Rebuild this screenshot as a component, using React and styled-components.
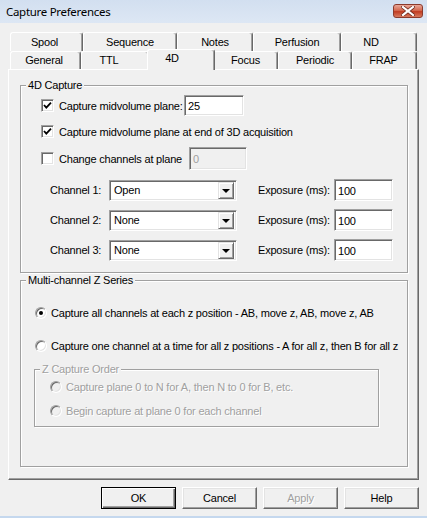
import React from 'react';
import styled, { createGlobalStyle } from 'styled-components';

const GlobalStyle = createGlobalStyle`
  html, body {
    margin: 0;
    padding: 0;
    background: #f0f0f0;
  }
  body {
    font-family: "Liberation Sans", Arial, sans-serif;
    font-size: 11px;
    letter-spacing: -0.2px;
    color: #000;
  }
`;

const Window = styled.div`
  width: 427px;
  height: 518px;
  box-sizing: border-box;
  display: flex;
  flex-direction: column;
  background: #f0f0f0;
  border-bottom: 2px solid #c5d8ee;
  overflow: hidden;
`;

const TitleBar = styled.div`
  height: 23px;
  flex: none;
  display: flex;
  align-items: flex-start;
  justify-content: space-between;
  padding: 0 4px 0 6px;
  background: linear-gradient(#d2dff0, #dde7f4);
  span {
    font-family: "Noto Sans", "Open Sans", sans-serif;
    font-size: 11.5px;
    letter-spacing: -0.3px;
    line-height: 23px;
  }
`;

const CloseButton = styled.div`
  margin-top: 4px;
  width: 30px;
  height: 14px;
  box-sizing: border-box;
  border: 1px solid #8b3a2c;
  border-radius: 3px;
  background: linear-gradient(#e9a899, #d46a51 45%, #c13c22 55%, #d77a5f);
  display: flex;
  align-items: center;
  justify-content: center;
`;

const Body = styled.div`
  flex: 1;
  display: flex;
  flex-direction: column;
  padding: 9px 8px 0;
`;

const TabRow = styled.div`
  display: flex;
  padding-left: 2px;
  height: ${(p) => p.$h}px;
`;

const Tab = styled.div`
  position: relative;
  width: ${(p) => p.$w}px;
  box-sizing: border-box;
  border: 1px solid #fff;
  border-bottom: none;
  border-right-color: #696969;
  border-radius: 3px 3px 0 0;
  box-shadow: inset -1px 0 0 #a0a0a0;
  display: flex;
  align-items: center;
  justify-content: center;
  padding-right: ${(p) => p.$shift || 0}px;
  padding-bottom: 1px;
  background: #f0f0f0;
`;

const ActiveTab = styled(Tab)`
  z-index: 2;
  margin: -2px -2px -1px;
  width: ${(p) => p.$w + 4}px;
  align-items: flex-start;
  padding-top: 2px;
`;

const Panel = styled.div`
  width: 411px;
  height: 411px;
  box-sizing: border-box;
  border: 1px solid;
  border-color: #fff #696969 #696969 #fff;
  box-shadow: inset -1px -1px 0 #a0a0a0;
  padding: 9px 10px 12px 11px;
  display: flex;
  flex-direction: column;
  gap: 1px;
`;

const Group = styled.fieldset`
  margin: ${(p) => p.$mt || 0}px 0 0;
  min-width: 0;
  width: ${(p) => (p.$w ? `${p.$w}px` : 'auto')};
  box-sizing: border-box;
  border: 1px solid #a0a0a0;
  box-shadow: 1px 1px 0 #fff, inset 1px 1px 0 #fff;
  padding: ${(p) => p.$pt}px 0 ${(p) => p.$pb}px ${(p) => p.$pl}px;
  display: flex;
  flex-direction: column;
  flex: ${(p) => (p.$grow ? 1 : 'none')};
  legend {
    margin-left: ${(p) => 5 - p.$pl}px;
    padding: 0 2px;
    line-height: 13px;
    background: #f0f0f0;
    color: ${(p) => (p.$disabled ? '#a0a0a0' : '#000')};
    text-shadow: ${(p) => (p.$disabled ? '1px 1px 0 #fff' : 'none')};
  }
`;

const CheckRow = styled.div`
  display: flex;
  align-items: center;
  height: ${(p) => p.$h}px;
  margin-top: ${(p) => p.$mt || 0}px;
`;

const Label = styled.span`
  width: ${(p) => (p.$w ? `${p.$w}px` : 'auto')};
  flex: none;
  white-space: nowrap;
  margin-left: ${(p) => p.$ml || 0}px;
  color: ${(p) => (p.$disabled ? '#a0a0a0' : '#000')};
  text-shadow: ${(p) => (p.$disabled ? '1px 1px 0 #fff' : 'none')};
`;

const sunken = `
  box-sizing: border-box;
  border: 1px solid;
  border-color: #a0a0a0 #fff #fff #a0a0a0;
  box-shadow: inset 1px 1px 0 #696969, inset -1px -1px 0 #e3e3e3;
`;

const CheckBox = styled.span`
  ${sunken}
  width: 13px;
  height: 13px;
  flex: none;
  background: #fff;
  display: flex;
  align-items: center;
  justify-content: center;
`;

const TextField = styled.div`
  ${sunken}
  width: ${(p) => p.$w}px;
  height: ${(p) => p.$h}px;
  flex: none;
  background: ${(p) => (p.$disabled ? '#f0f0f0' : '#fff')};
  color: ${(p) => (p.$disabled ? '#a0a0a0' : '#000')};
  display: flex;
  align-items: center;
  padding: 1px 3px 0;
`;

const ChannelRow = styled.div`
  display: flex;
  align-items: center;
  height: 22px;
  margin-left: 9px;
  margin-top: ${(p) => p.$mt}px;
`;

const Combo = styled.div`
  ${sunken}
  width: 128px;
  height: 21px;
  flex: none;
  background: #fff;
  display: flex;
  align-items: center;
  justify-content: space-between;
  padding: 2px 2px 2px 4px;
`;

const DropButton = styled.div`
  width: 16px;
  height: 17px;
  box-sizing: border-box;
  border: 1px solid;
  border-color: #e3e3e3 #696969 #696969 #e3e3e3;
  box-shadow: inset 1px 1px 0 #fff, inset -1px -1px 0 #a0a0a0;
  background: #f0f0f0;
  display: flex;
  align-items: center;
  justify-content: center;
  &::after {
    content: '';
    border-left: 4px solid transparent;
    border-right: 4px solid transparent;
    border-top: 4px solid #000;
    margin-top: 1px;
  }
`;

const RadioRow = styled.div`
  display: flex;
  align-items: center;
  height: 16px;
  padding-left: ${(p) => p.$pl || 0}px;
  margin-top: ${(p) => p.$mt || 0}px;
  gap: 4px;
`;

const Radio = styled.span`
  ${sunken}
  width: 12px;
  height: 12px;
  flex: none;
  border-radius: 50%;
  background: ${(p) => (p.$disabled ? '#f0f0f0' : '#fff')};
  display: flex;
  align-items: center;
  justify-content: center;
  &::after {
    content: '';
    display: ${(p) => (p.$checked ? 'block' : 'none')};
    width: 4px;
    height: 4px;
    border-radius: 50%;
    background: #000;
  }
`;

const ButtonBar = styled.div`
  display: flex;
  justify-content: flex-end;
  gap: 6px;
  margin-top: 7px;
`;

const Button = styled.div`
  width: 75px;
  height: 22px;
  box-sizing: border-box;
  border: 1px solid;
  border-color: ${(p) => (p.$default ? '#000' : '#fff #696969 #696969 #fff')};
  box-shadow: ${(p) =>
    p.$default
      ? 'inset 1px 1px 0 #fff, inset -1px -1px 0 #696969, inset -2px -2px 0 #a0a0a0'
      : 'inset -1px -1px 0 #a0a0a0, inset 1px 1px 0 #e3e3e3'};
  display: flex;
  align-items: center;
  justify-content: center;
  color: ${(p) => (p.$disabled ? '#a0a0a0' : '#000')};
  text-shadow: ${(p) => (p.$disabled ? '1px 1px 0 #fff' : 'none')};
`;

const row1 = [
  ['Spool', 73, 4],
  ['Sequence', 94],
  ['Notes', 76],
  ['Perfusion', 88],
  ['ND', 76, 16],
];

const row2 = [
  ['General', 71, 3],
  ['TTL', 68, 12],
  ['4D', 64, 18, true],
  ['Focus', 65],
  ['Periodic', 74],
  ['FRAP', 65, 2],
];

const channels = [
  ['Channel 1:', 'Open'],
  ['Channel 2:', 'None'],
  ['Channel 3:', 'None'],
];

const Check = () => (
  <svg width="9" height="9" viewBox="0 0 9 9">
    <path d="M1 4 L3.3 6.6 L8 1.6" fill="none" stroke="#000" strokeWidth="1.8" />
  </svg>
);

const CloseX = () => (
  <svg width="14" height="10" viewBox="0 0 14 10">
    <path d="M2 1 L12 9 M12 1 L2 9" stroke="#6e2a1e" strokeWidth="3.6" strokeLinecap="square" />
    <path d="M2 1 L12 9 M12 1 L2 9" stroke="#fff" strokeWidth="2.2" strokeLinecap="square" />
  </svg>
);

const App = () => {
  return (
    <>
      <GlobalStyle />
      <Window>
        <TitleBar>
          <span>Capture Preferences</span>
          <CloseButton>
            <CloseX />
          </CloseButton>
        </TitleBar>

        <Body>
          <TabRow $h={19}>
            {row1.map(([name, w, shift]) => (
              <Tab key={name} $w={w} $shift={shift}>
                {name}
              </Tab>
            ))}
          </TabRow>
          <TabRow $h={18}>
            {row2.map(([name, w, shift, active]) =>
              active ? (
                <ActiveTab key={name} $w={w} $shift={shift}>
                  {name}
                </ActiveTab>
              ) : (
                <Tab key={name} $w={w} $shift={shift}>
                  {name}
                </Tab>
              )
            )}
          </TabRow>

          <Panel>
            <Group $pt={3} $pb={11} $pl={20}>
              <legend>4D Capture</legend>
              <CheckRow $h={21}>
                <CheckBox>
                  <Check />
                </CheckBox>
                <Label $w={125} $ml={5}>
                  Capture midvolume plane:
                </Label>
                <TextField $w={60} $h={21}>
                  25
                </TextField>
              </CheckRow>
              <CheckRow $h={21} $mt={5}>
                <CheckBox>
                  <Check />
                </CheckBox>
                <Label $ml={5}>Capture midvolume plane at end of 3D acquisition</Label>
              </CheckRow>
              <CheckRow $h={23} $mt={5}>
                <CheckBox />
                <Label $w={130} $ml={5}>
                  Change channels at plane
                </Label>
                <TextField $w={58} $h={23} $disabled>
                  0
                </TextField>
              </CheckRow>
              {channels.map(([label, value], i) => (
                <ChannelRow key={label} $mt={i === 0 ? 9 : 8}>
                  <Label $w={59}>{label}</Label>
                  <Combo>
                    <span>{value}</span>
                    <DropButton />
                  </Combo>
                  <Label $w={76} $ml={21}>
                    Exposure (ms):
                  </Label>
                  <TextField $w={59} $h={22}>
                    100
                  </TextField>
                </ChannelRow>
              ))}
            </Group>

            <Group $pt={18} $pb={0} $pl={13} $grow>
              <legend>Multi-channel Z Series</legend>
              <RadioRow $pl={1}>
                <Radio $checked />
                <Label>Capture all channels at each z position - AB, move z, AB, move z, AB</Label>
              </RadioRow>
              <RadioRow $pl={1} $mt={17}>
                <Radio />
                <Label>Capture one channel at a time for all z positions - A for all z, then B for all z</Label>
              </RadioRow>

              <Group $pt={3} $pb={7} $pl={15} $w={345} $mt={9} $disabled>
                <legend>Z Capture Order</legend>
                <RadioRow>
                  <Radio $disabled />
                  <Label $disabled>Capture plane 0 to N for A, then N to 0 for B, etc.</Label>
                </RadioRow>
                <RadioRow $mt={8}>
                  <Radio $disabled />
                  <Label $disabled>Begin capture at plane 0 for each channel</Label>
                </RadioRow>
              </Group>
            </Group>
          </Panel>

          <ButtonBar>
            <Button $default>OK</Button>
            <Button>Cancel</Button>
            <Button $disabled>Apply</Button>
            <Button>Help</Button>
          </ButtonBar>
        </Body>
      </Window>
    </>
  );
};

export default App;
